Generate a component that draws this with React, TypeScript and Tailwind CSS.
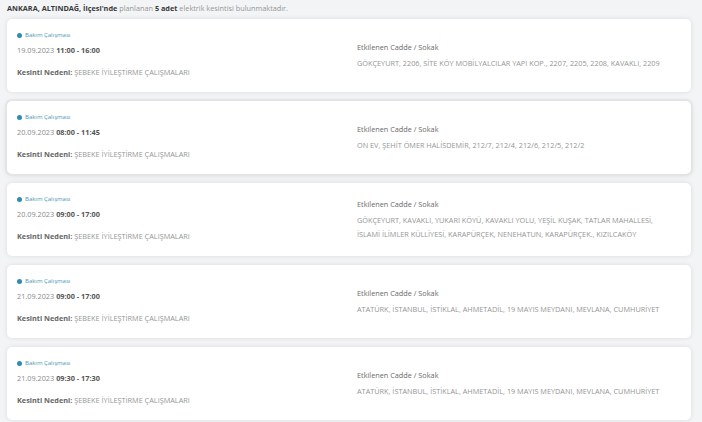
const outages = [
    {
        date: '19.09.2023',
        time: '11:00 - 16:00',
        streets: 'GÖKÇEYURT, 2206, SİTE KÖY MOBİLYALCILAR YAPI KOP., 2207, 2205, 2208, KAVAKLI, 2209',
    },
    {
        date: '20.09.2023',
        time: '08:00 - 11:45',
        streets: 'ON EV, ŞEHİT ÖMER HALİSDEMİR, 212/7, 212/4, 212/6, 212/5, 212/2',
        active: true,
    },
    {
        date: '20.09.2023',
        time: '09:00 - 17:00',
        streets:
            'GÖKÇEYURT, KAVAKLI, YUKARI KÖYÜ, KAVAKLI YOLU, YEŞİL KUŞAK, TATLAR MAHALLESİ, İSLAMİ İLİMLER KÜLLİYESİ, KARAPÜRÇEK, NENEHATUN, KARAPÜRÇEK., KIZILCAKÖY',
    },
    {
        date: '21.09.2023',
        time: '09:00 - 17:00',
        streets: 'ATATÜRK, İSTANBUL, İSTİKLAL, AHMETADİL, 19 MAYIS MEYDANI, MEVLANA, CUMHURİYET',
    },
    {
        date: '21.09.2023',
        time: '09:30 - 17:30',
        streets: 'ATATÜRK, İSTANBUL, İSTİKLAL, AHMETADİL, 19 MAYIS MEYDANI, MEVLANA, CUMHURİYET',
    },
];

export default function App() {
    return (
        <div
            className="h-[422px] w-[702px] overflow-hidden bg-[#f3f4f6] pl-[7px] pr-[11px] text-[7.3px] text-[#959595]"
            style={{ fontFamily: '"Open Sans", sans-serif' }}
        >
            <p className="h-[19px] pt-[3px] text-[7.3px] leading-[10px]">
                <span className="font-bold text-[#3a3a3a]">ANKARA, ALTINDAĞ, İlçesi'nde</span> planlanan{' '}
                <span className="font-bold text-[#3a3a3a]">5 adet</span> elektrik kesintisi bulunmaktadır.
            </p>

            <div className="flex flex-col gap-[9px]">
                {outages.map((o, i) => (
                    <div
                        key={i}
                        className={`grid h-[73px] grid-cols-2 rounded-[5px] bg-white ${
                            o.active
                                ? 'shadow-[0_0_0_2px_#e4e4e4,0_1px_6px_rgba(0,0,0,0.12)]'
                                : 'shadow-[0_0_5px_rgba(0,0,0,0.1)]'
                        }`}
                    >
                        <div className="pl-[10px] pt-[10px]">
                            <div className="flex h-[12px] items-center gap-[3px] text-[6px] text-[#4a97b9]">
                                <span className="h-[5px] w-[5px] rounded-full bg-[#2d8cb8]" />
                                Bakım Çalışması
                            </div>
                            <div className="mt-[3px] leading-[12px] text-[#8a8a8a]">
                                {o.date} <span className="font-bold text-[#555]">{o.time}</span>
                            </div>
                            <div className="mt-[10px] leading-[12px]">
                                <span className="font-bold text-[#666]">Kesinti Nedeni:</span> ŞEBEKE İYİLEŞTİRME
                                ÇALIŞMALARI
                            </div>
                        </div>
                        <div className="self-center pl-[8px] pr-[20px]">
                            <div className="leading-[12px] text-[#6a6a6a]">Etkilenen Cadde / Sokak</div>
                            <div className="mt-[3px] leading-[14px]">{o.streets}</div>
                        </div>
                    </div>
                ))}
            </div>
        </div>
    );
}
